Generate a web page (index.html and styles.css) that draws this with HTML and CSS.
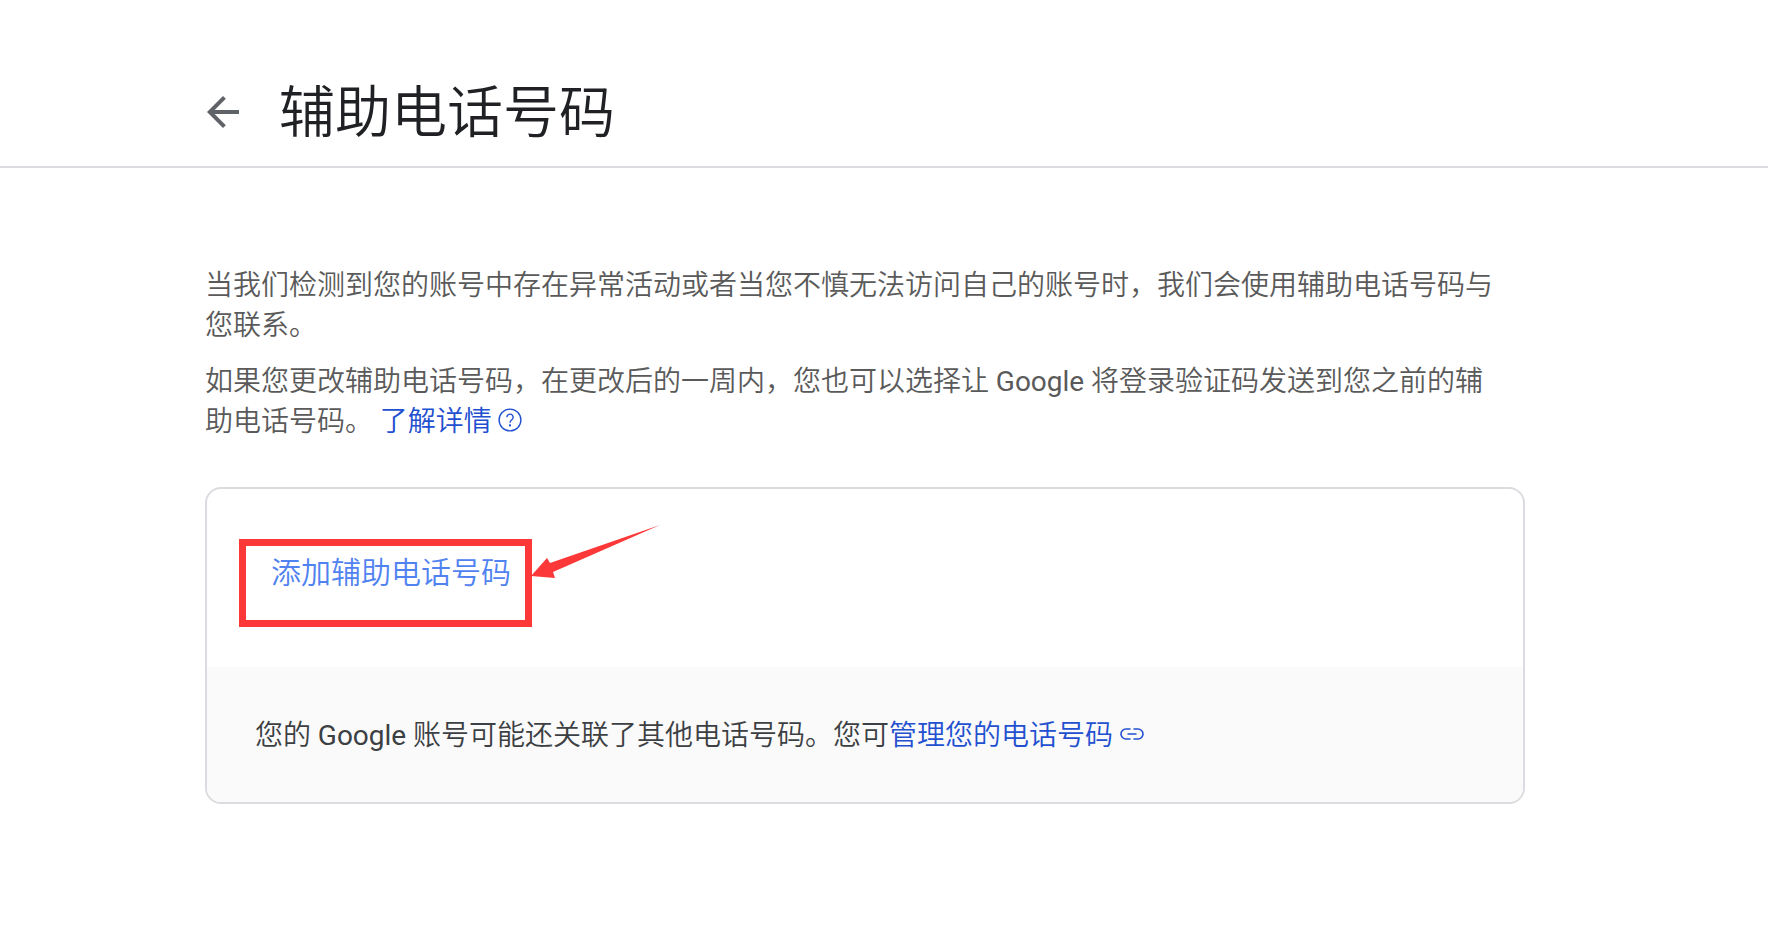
FILE: index.html
```html
<!DOCTYPE html>
<html lang="zh-CN">
<head>
<meta charset="utf-8">
<meta name="viewport" content="width=device-width, initial-scale=1">
<title>辅助电话号码</title>
<link rel="stylesheet" href="styles.css">
</head>
<body>
<header class="header">
  <div class="container header-row">
    <button class="back" type="button" aria-label="返回">
      <svg class="back-icon" viewBox="0 0 24 24" aria-hidden="true"><path d="M20 11H7.83l5.59-5.59L12 4l-8 8 8 8 1.41-1.41L7.83 13H20v-2z"/></svg>
    </button>
    <h1 class="title">辅助电话号码</h1>
  </div>
</header>
<main class="container main">
  <div class="intro">
    <p class="text">当我们检测到您的账号中存在异常活动或者当您不慎无法访问自己的账号时，我们会使用辅助电话号码与您联系。</p>
    <p class="text">如果您更改辅助电话号码，在更改后的一周内，您也可以选择让 <span class="latin">Google</span> 将登录验证码发送到您之前的辅助电话号码。 <a class="link" href="#help">了解详情<svg class="help-icon" viewBox="0 0 24 24" aria-hidden="true"><circle cx="12" cy="12" r="10.9" fill="none" stroke="currentColor" stroke-width="1.4"/><path d="M8.9 9.3a3.1 3.1 0 1 1 5 2.4c-1.1.9-1.9 1.5-1.9 3" fill="none" stroke="currentColor" stroke-width="1.4"/><rect x="11" y="16.4" width="2" height="2" fill="currentColor"/></svg></a></p>
  </div>
  <section class="card">
    <div class="card-body">
      <button class="add" type="button">添加辅助电话号码</button>
    </div>
    <div class="card-footer">
      <p class="note">您的 <span class="latin">Google</span> 账号可能还关联了其他电话号码。您可<a class="link" href="#phones">管理您的电话号码<svg class="link-icon" viewBox="0 0 24 12" aria-hidden="true"><path fill="none" stroke="currentColor" stroke-width="1.6" d="M10.5 1H6a5 5 0 0 0 0 10h4.500M13.500 1H18a5 5 0 0 1 0 10h-4.500M7.500 6h9"/></svg></a></p>
    </div>
    <svg class="callout" viewBox="0 0 424 104" aria-hidden="true">
      <rect x="3.5" y="18.5" width="286" height="81" fill="none" stroke="#fc3838" stroke-width="7"/>
      <path d="M292 52 308 34 311 39 421 1 314 48 316 54z" fill="#fc3838"/>
    </svg>
  </section>
</main>
</body>
</html>
```
FILE: styles.css
```css
* {
  box-sizing: border-box;
}

body {
  margin: 0;
  background: #fff;
  color: #3c4043;
  font-family: Roboto, "Noto Sans CJK SC", sans-serif;
  font-size: 28px;
  font-weight: 350;
  line-height: 40px;
}

.header {
  padding: 72px 38px 14px 0;
  border-bottom: 2px solid #dadce0;
}

.container {
  max-width: 1320px;
  margin: 0 auto;
}

.header-row {
  display: flex;
  align-items: center;
  gap: 32px;
}

.back {
  display: flex;
  margin-left: -6px;
  padding: 0;
  border: 0;
  background: none;
  color: #5f6368;
  cursor: pointer;
}

.back-icon {
  width: 48px;
  height: 48px;
  fill: currentColor;
}

.title {
  margin: 0;
  padding-top: 2px;
  color: #202124;
  font-size: 56px;
  font-weight: 350;
  line-height: 78px;
}

.latin {
  font-weight: 400;
}

.main {
  max-width: 1358px;
  padding: 98px 38px 48px 0;
}

.intro {
  display: flex;
  flex-direction: column;
  gap: 16px;
  padding-right: 16px;
  margin-bottom: 45px;
}

.text {
  margin: 0;
  color: #5a5a5a;
}

.link {
  color: #2250d0;
  text-decoration: none;
}

.help-icon {
  width: 24px;
  height: 24px;
  margin-left: 6px;
  vertical-align: -1px;
}

.link-icon {
  width: 24px;
  height: 12px;
  margin-left: 7px;
  vertical-align: 5px;
}

.card {
  position: relative;
  border: 2px solid #dadce0;
  border-radius: 16px;
}

.card-body {
  padding: 64px 64px 74px;
}

.add {
  display: block;
  padding: 0;
  border: 0;
  background: none;
  color: #5082f0;
  font: inherit;
  font-size: 30px;
  line-height: 40px;
  cursor: pointer;
}

.card-footer {
  padding: 49px 48px 46px;
  border-radius: 0 0 14px 14px;
  background: #fafafa;
}

.note {
  margin: 0;
}

.callout {
  position: absolute;
  top: 35px;
  left: 32px;
  width: 424px;
  height: 104px;
  pointer-events: none;
}
```
